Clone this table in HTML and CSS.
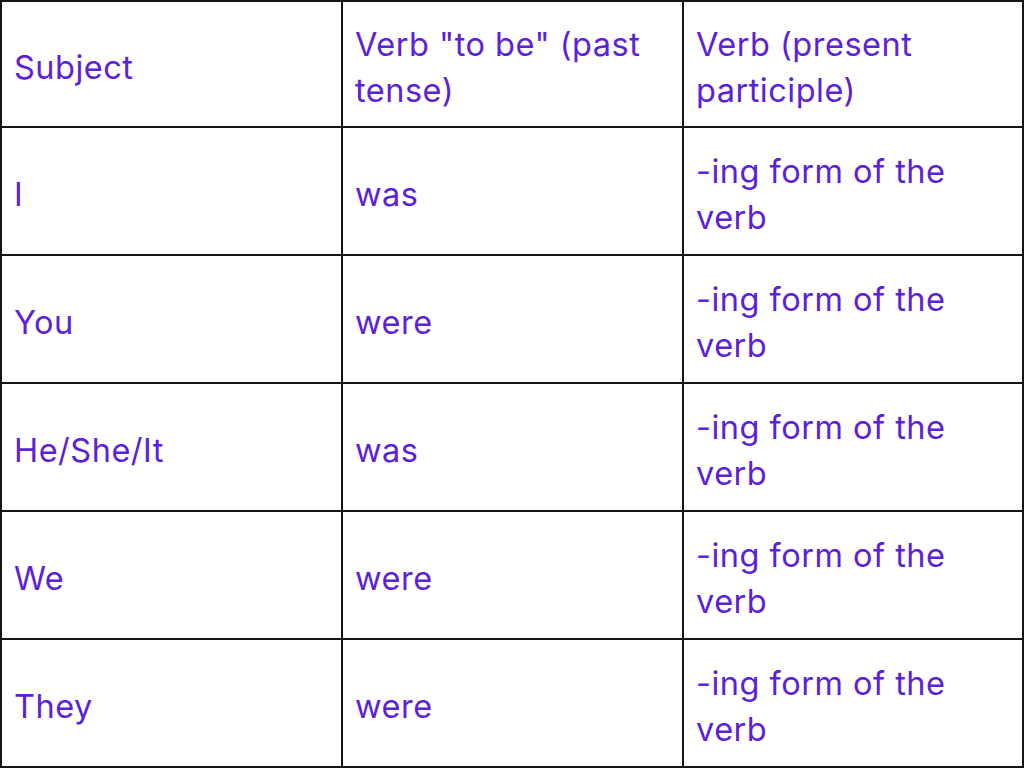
FILE: index.html
```html
<!DOCTYPE html>
<html lang="en">
<head>
<meta charset="utf-8">
<title>Past continuous</title>
<link rel="stylesheet" href="styles.css">
</head>
<body>
<div class="grammar">
  <div class="cell">Subject</div><div class="cell">Verb "to be" (past tense)</div><div class="cell">Verb (present participle)</div>
  <div class="cell">I</div><div class="cell">was</div><div class="cell">-ing form of the verb</div>
  <div class="cell">You</div><div class="cell">were</div><div class="cell">-ing form of the verb</div>
  <div class="cell">He/She/It</div><div class="cell">was</div><div class="cell">-ing form of the verb</div>
  <div class="cell">We</div><div class="cell">were</div><div class="cell">-ing form of the verb</div>
  <div class="cell">They</div><div class="cell">were</div><div class="cell">-ing form of the verb</div>
</div>
</body>
</html>
```
FILE: styles.css
```css
html, body {
  margin: 0;
  padding: 0;
  background: #ffffff;
}
.grammar {
  box-sizing: border-box;
  width: 1024px;
  height: 768px;
  display: grid;
  grid-template-columns: 341px 341px 340px;
  grid-template-rows: 126px repeat(5, 128px);
  border-top: 2px solid #141414;
  border-left: 2px solid #141414;
  font-family: Inter, "Noto Sans", sans-serif;
  font-size: 32.5px;
  letter-spacing: 0.5px;
  line-height: 46px;
  color: #5b22d9;
}
.cell {
  box-sizing: border-box;
  border-right: 2px solid #141414;
  border-bottom: 2px solid #141414;
  padding: 7px 24px 0 12px;
  display: flex;
  align-items: center;
}
```
